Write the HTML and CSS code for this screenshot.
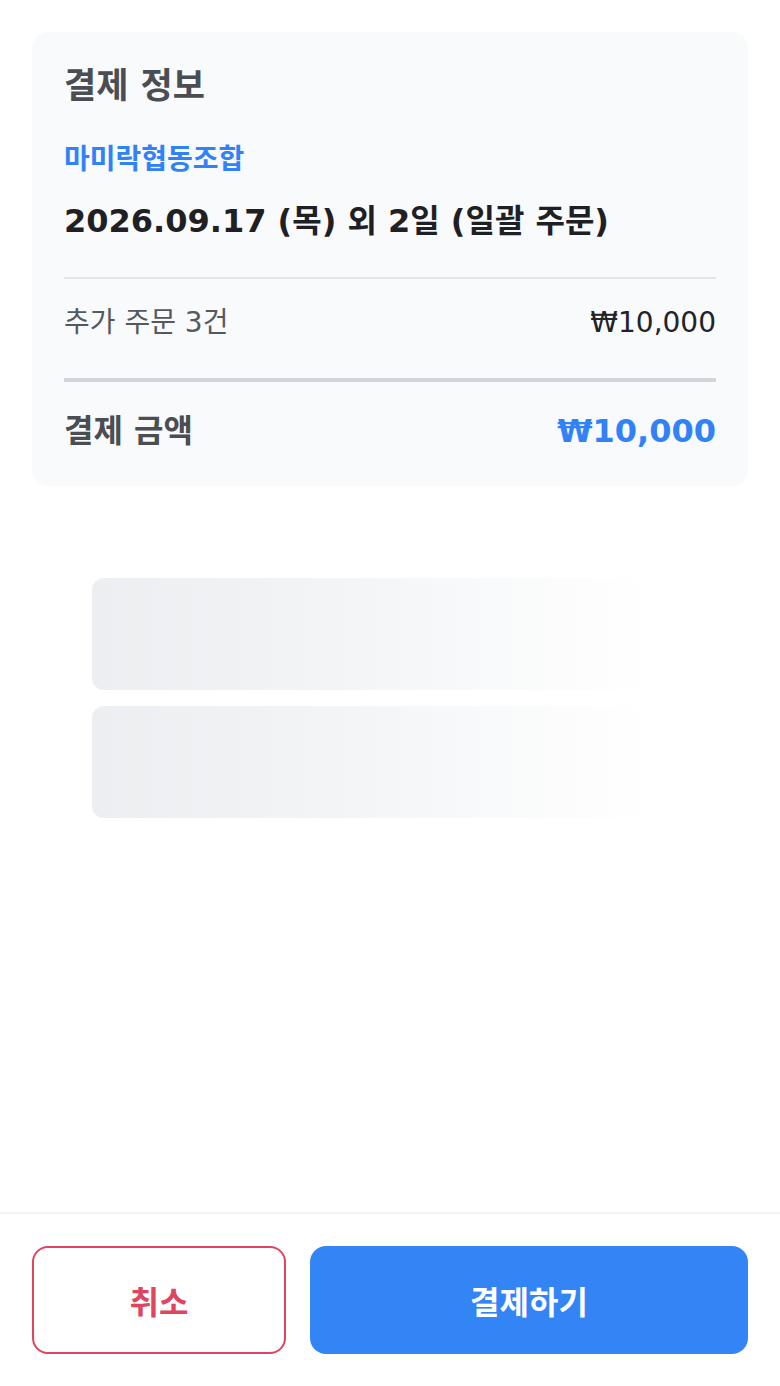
FILE: index.html
```html
<!DOCTYPE html>
<html lang="ko">
<head>
<meta charset="utf-8">
<title>결제 정보</title>
<link rel="stylesheet" href="styles.css">
</head>
<body>
<div class="page">
  <main class="main">
    <section class="card">
      <h2 class="card-title">결제 정보</h2>
      <div class="store">마미락협동조합</div>
      <div class="date">2026.09.17 (목) 외 2일 (일괄 주문)</div>
      <hr class="divider">
      <div class="row">
        <span class="row-label">추가 주문 3건</span>
        <span class="row-value">₩10,000</span>
      </div>
      <hr class="divider thick">
      <div class="total">
        <span class="total-label">결제 금액</span>
        <span class="total-value">₩10,000</span>
      </div>
    </section>
    <div class="skeletons">
      <div class="skeleton"></div>
      <div class="skeleton"></div>
    </div>
  </main>
  <footer class="footer">
    <button class="btn btn-cancel">취소</button>
    <button class="btn btn-pay">결제하기</button>
  </footer>
</div>
</body>
</html>
```

FILE: styles.css
```css
* { box-sizing: border-box; }
html, body {
  margin: 0;
  padding: 0;
  background: #ffffff;
  font-family: "DejaVu Sans", "Noto Sans CJK KR", sans-serif;
}
.page {
  height: 1386px;
  display: flex;
  flex-direction: column;
}
.main {
  flex: 1;
  padding: 32px 32px 0;
}
.card {
  background: #f8fafc;
  border-radius: 16px;
  padding: 32px 32px 33px;
}
.card-title {
  margin: 0;
  font-size: 35px;
  line-height: 44px;
  font-weight: 700;
  color: #4a4d52;
}
.store {
  margin-top: 34px;
  font-size: 28px;
  line-height: 36px;
  font-weight: 700;
  color: #3182f6;
}
.date {
  margin-top: 23px;
  font-size: 32px;
  line-height: 40px;
  font-weight: 700;
  color: #1f2024;
}
.divider {
  border: 0;
  height: 2px;
  background: #e2e5e9;
  margin: 36px 0 0;
}
.divider.thick {
  height: 4px;
  background: #d1d5db;
  margin-top: 35px;
}
.row {
  margin-top: 24px;
  display: flex;
  justify-content: space-between;
  align-items: center;
  line-height: 40px;
  font-size: 28px;
}
.row-label { color: #55585d; }
.row-value { color: #222326; }
.total {
  margin-top: 27px;
  display: flex;
  justify-content: space-between;
  align-items: center;
  line-height: 44px;
}
.total-label {
  font-size: 32px;
  font-weight: 700;
  color: #4a4d52;
}
.total-value {
  font-size: 32px;
  font-weight: 700;
  color: #3182f6;
}
.skeletons {
  margin-top: 92px;
  padding: 0 60px;
  display: flex;
  flex-direction: column;
  gap: 16px;
}
.skeleton {
  height: 112px;
  border-radius: 12px;
  background: linear-gradient(90deg, #eceef1 0%, #f1f2f4 28%, #f5f6f8 50%, #f9fafb 68%, #fdfdfd 84%, #ffffff 94%);
}
.footer {
  border-top: 2px solid #f2f3f5;
  padding: 32px;
  display: grid;
  grid-template-columns: 254px 1fr;
  gap: 24px;
}
.btn {
  height: 108px;
  border-radius: 16px;
  font-family: inherit;
  font-size: 32px;
  font-weight: 700;
  cursor: pointer;
}
.btn-cancel {
  background: #ffffff;
  border: 2px solid #e0445f;
  color: #e0445f;
}
.btn-pay {
  background: #3385f5;
  border: 0;
  color: #ffffff;
}
```
